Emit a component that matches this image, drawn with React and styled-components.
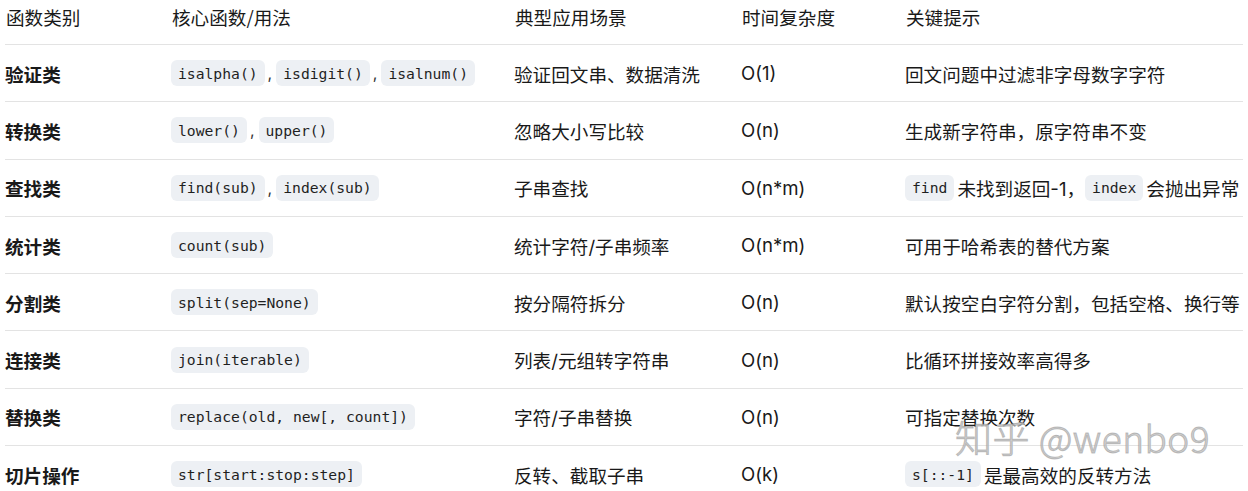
import styled, { createGlobalStyle } from "styled-components";

const GlobalStyle = createGlobalStyle`
  html, body {
    margin: 0;
    padding: 0;
    background: #ffffff;
  }
  body {
    font-family: "Inter", "Noto Sans CJK SC", sans-serif;
    color: #191919;
  }
`;

const Page = styled.div`
  position: relative;
  width: 1248px;
  height: 491px;
  overflow: hidden;
  background: #fff;
`;

const Table = styled.div`
  margin-left: 5px;
  width: 1238px;
  display: grid;
  grid-template-columns: 166px 343px 227px 164px 1fr;
`;

const HeadCell = styled.div`
  height: 45px;
  box-sizing: border-box;
  display: flex;
  align-items: center;
  padding-left: 1px;
  padding-bottom: 11px;
  font-size: 18.6px;
  font-family: "Noto Sans CJK SC", sans-serif;
  font-weight: 400;
  border-bottom: 1px solid #e3e3e3;
`;

const Cell = styled.div`
  height: 56.3px;
  display: flex;
  align-items: center;
  padding-left: 0;
  font-size: 18.6px;
  font-family: "Inter", "Noto Sans CJK SC", sans-serif;
  font-weight: ${(p) => (p.$bold ? 700 : 400)};
  border-bottom: ${(p) => (p.$last ? "none" : "1px solid #e3e3e3")};
  white-space: nowrap;
`;

const Code = styled.code`
  display: inline-flex;
  align-items: center;
  height: 26px;
  padding: 0 7px;
  border-radius: 6px;
  background: #edf0f4;
  font-family: "DejaVu Sans Mono", "Liberation Mono", monospace;
  font-size: 14.7px;
  color: #1f1f1f;
  margin-right: ${(p) => (p.$gap ? "3px" : "0")};
`;

const Sep = styled.span`
  font-size: 16px;
  margin: 0 4px 0 3px;
  color: #333;
`;

const Watermark = styled.div`
  position: absolute;
  left: 955px;
  top: 413px;
  font-family: "Noto Sans CJK SC", "Noto Sans", sans-serif;
  font-size: 37px;
  line-height: 1.3;
  font-weight: 300;
  letter-spacing: 0.5px;
  color: rgba(195, 195, 195, 0.75);
  -webkit-text-stroke: 1px rgba(140, 140, 140, 0.5);
  text-shadow: 1px 1px 0 rgba(255, 255, 255, 0.6);
  pointer-events: none;
  white-space: nowrap;
`;

const headers = ["函数类别", "核心函数/用法", "典型应用场景", "时间复杂度", "关键提示"];

const rows = [
  {
    cat: "验证类",
    codes: ["isalpha()", "isdigit()", "isalnum()"],
    use: "验证回文串、数据清洗",
    time: "O(1)",
    tip: ["回文问题中过滤非字母数字字符"],
  },
  {
    cat: "转换类",
    codes: ["lower()", "upper()"],
    use: "忽略大小写比较",
    time: "O(n)",
    tip: ["生成新字符串，原字符串不变"],
  },
  {
    cat: "查找类",
    codes: ["find(sub)", "index(sub)"],
    use: "子串查找",
    time: "O(n*m)",
    tip: [{ code: "find" }, "未找到返回-1，", { code: "index" }, "会抛出异常"],
  },
  {
    cat: "统计类",
    codes: ["count(sub)"],
    use: "统计字符/子串频率",
    time: "O(n*m)",
    tip: ["可用于哈希表的替代方案"],
  },
  {
    cat: "分割类",
    codes: ["split(sep=None)"],
    use: "按分隔符拆分",
    time: "O(n)",
    tip: ["默认按空白字符分割，包括空格、换行等"],
  },
  {
    cat: "连接类",
    codes: ["join(iterable)"],
    use: "列表/元组转字符串",
    time: "O(n)",
    tip: ["比循环拼接效率高得多"],
  },
  {
    cat: "替换类",
    codes: ["replace(old, new[, count])"],
    use: "字符/子串替换",
    time: "O(n)",
    tip: ["可指定替换次数"],
  },
  {
    cat: "切片操作",
    codes: ["str[start:stop:step]"],
    use: "反转、截取子串",
    time: "O(k)",
    tip: [{ code: "s[::-1]" }, "是最高效的反转方法"],
  },
];

export default function App() {
  return (
    <>
      <GlobalStyle />
      <Page>
        <Table>
          {headers.map((h) => (
            <HeadCell key={h}>{h}</HeadCell>
          ))}
          {rows.map((r, i) => {
            const last = i === rows.length - 1;
            return [
              <Cell key={r.cat + "a"} $bold $last={last}>
                {r.cat}
              </Cell>,
              <Cell key={r.cat + "b"} $last={last}>
                {r.codes.map((c, j) => (
                  <span key={c} style={{ display: "inline-flex", alignItems: "center" }}>
                    {j > 0 && <Sep>,</Sep>}
                    <Code>{c}</Code>
                  </span>
                ))}
              </Cell>,
              <Cell key={r.cat + "c"} $last={last}>
                {r.use}
              </Cell>,
              <Cell key={r.cat + "d"} $last={last}>
                {r.time}
              </Cell>,
              <Cell key={r.cat + "e"} $last={last}>
                {r.tip.map((t, j) =>
                  typeof t === "string" ? (
                    <span key={j}>{t}</span>
                  ) : (
                    <Code key={j} $gap>
                      {t.code}
                    </Code>
                  )
                )}
              </Cell>,
            ];
          })}
        </Table>
        <Watermark>知乎 @wenbo9</Watermark>
      </Page>
    </>
  );
}
